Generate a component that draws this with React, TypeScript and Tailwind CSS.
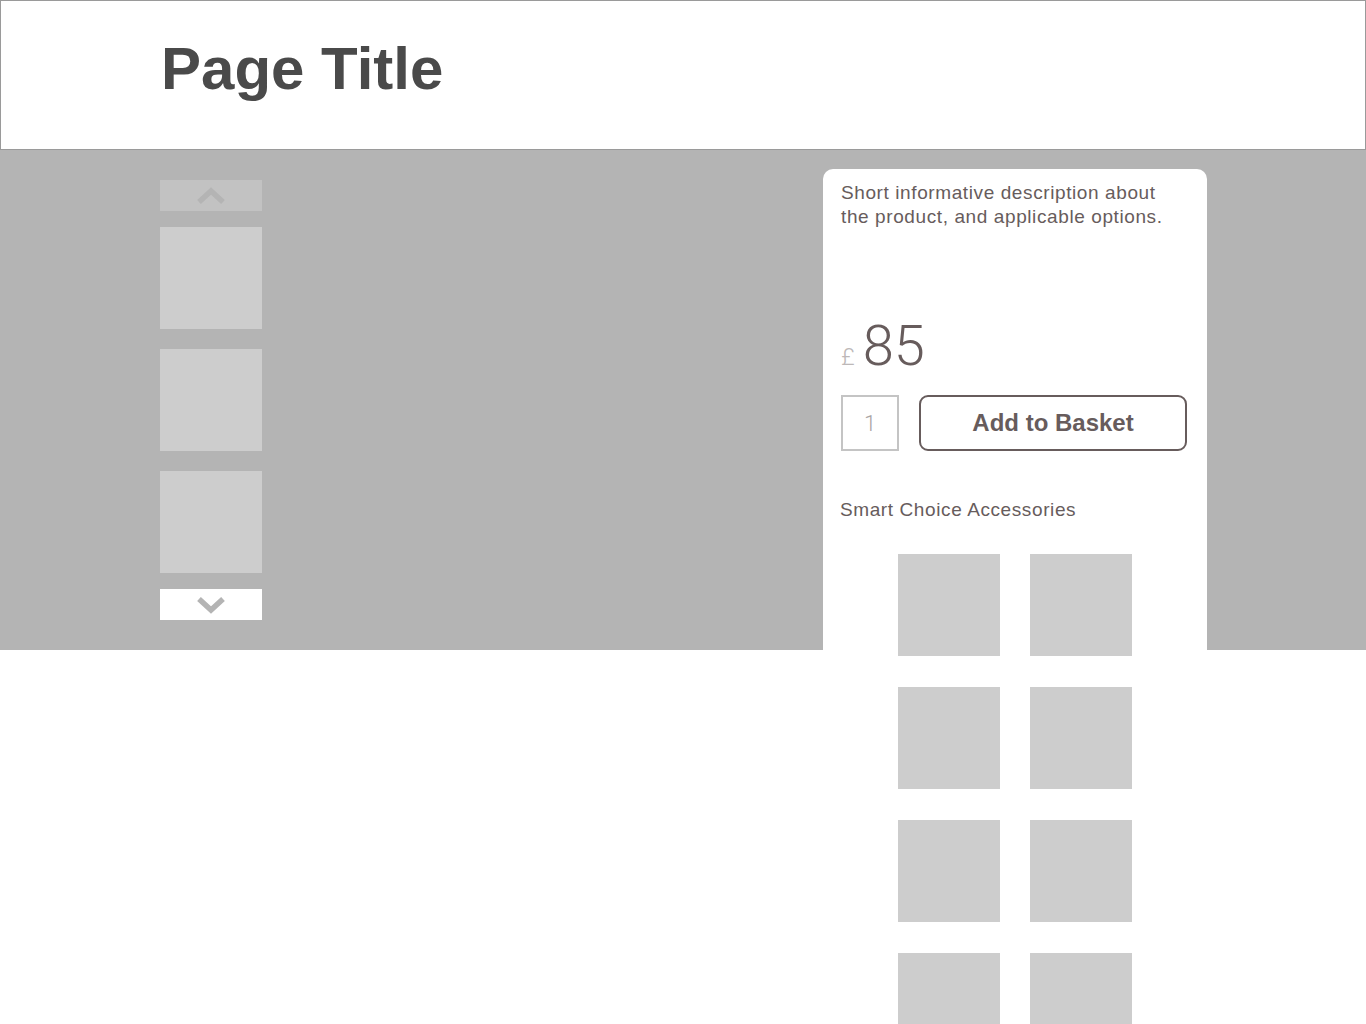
import React from 'react'

const ChevronUp = () => (
  <svg width="30" height="18" viewBox="0 0 30 18">
    <path d="M3 15 L15 4 L27 15" fill="none" stroke="#b4b4b4" strokeWidth="5.5" />
  </svg>
)

const ChevronDown = () => (
  <svg width="30" height="18" viewBox="0 0 30 18">
    <path d="M3 3 L15 14 L27 3" fill="none" stroke="#b4b4b4" strokeWidth="5.5" />
  </svg>
)

const App: React.FC = () => {
  const thumbs = [1, 2, 3]
  const accessories = [1, 2, 3, 4, 5, 6, 7, 8]

  return (
    <div className="h-[1024px] overflow-hidden bg-white font-['Liberation_Sans',Arial,sans-serif]">
      {/* Header */}
      <div className="h-[150px] border border-[#9a9a9a] pl-[160px] pt-[33px]">
        <h1 className="text-[60px] font-bold leading-[70px] text-[#4a4a4a]">Page Title</h1>
      </div>

      {/* Product band */}
      <div className="flex h-[500px] items-start bg-[#b4b4b4]">
        {/* Thumbnails */}
        <div className="ml-[160px] mt-[30px] flex w-[102px] flex-col">
          <div className="flex h-[31px] items-center justify-center bg-[#c2c2c2]">
            <ChevronUp />
          </div>
          <div className="mt-[16px] flex flex-col gap-[20px]">
            {thumbs.map((t) => (
              <div key={t} className="h-[102px] w-[102px] bg-[#cdcdcd]" />
            ))}
          </div>
          <div className="mt-[16px] flex h-[31px] items-center justify-center bg-white">
            <ChevronDown />
          </div>
        </div>

        {/* Details card */}
        <div className="ml-[561px] mt-[19px] h-[900px] w-[384px] rounded-t-[10px] bg-white px-[18px] pt-[12px] text-[#675c5c]">
          <p className="text-[19px] leading-[24px] tracking-[0.6px]">
            Short informative description about the product, and applicable options.
          </p>

          <div className="mt-[89px] flex items-baseline">
            <span className="font-['Roboto',sans-serif] text-[24px] font-light leading-none text-[#bdb8b8]">£</span>
            <span className="ml-[8px] font-['Roboto',sans-serif] text-[56px] font-light leading-[56px]">85</span>
          </div>

          <div className="mt-[21px] flex items-center">
            <div className="flex h-[56px] w-[58px] items-center justify-center border-2 border-[#c4c4c4] font-['Roboto',sans-serif] text-[22px] font-light text-[#aaa5a5]">
              1
            </div>
            <button className="ml-[20px] h-[56px] w-[268px] rounded-[9px] border-2 border-[#675c5c] text-[24px] font-bold">
              Add to Basket
            </button>
          </div>

          <p className="mt-[47px] -ml-px text-[19px] leading-[24px] tracking-[0.6px]">Smart Choice Accessories</p>

          <div className="mt-[32px] grid grid-cols-[102px_102px] justify-center gap-x-[30px] gap-y-[31px]">
            {accessories.map((a) => (
              <div key={a} className="h-[102px] w-[102px] bg-[#cdcdcd]" />
            ))}
          </div>
        </div>
      </div>
    </div>
  )
}

export default App
